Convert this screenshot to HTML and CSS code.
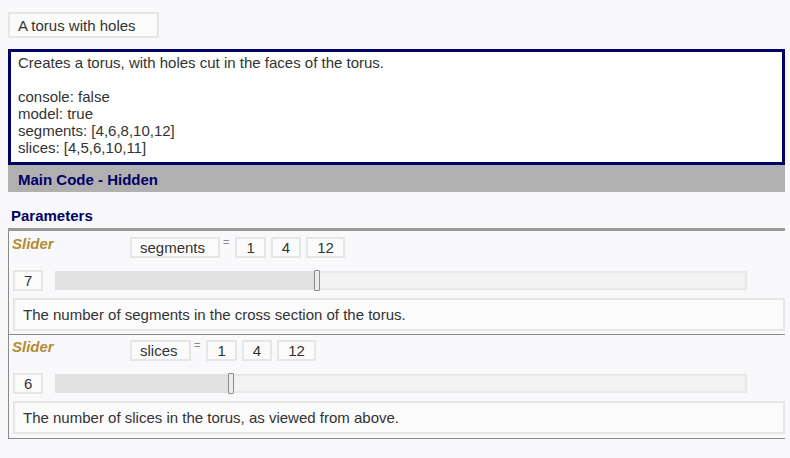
FILE: index.html
```html
<!DOCTYPE html>
<html>
<head>
<meta charset="utf-8">
<link rel="stylesheet" href="styles.css">
</head>
<body>
<div class="page">
  <div class="title">A torus with holes</div>
  <div class="desc">
    <div>Creates a torus, with holes cut in the faces of the torus.</div>
    <div class="blank">&nbsp;</div>
    <div>console: false</div>
    <div>model: true</div>
    <div>segments: [4,6,8,10,12]</div>
    <div>slices: [4,5,6,10,11]</div>
  </div>
  <div class="codebar">Main Code - Hidden</div>
  <div class="params-title">Parameters</div>
  <div class="params">
    <div class="slider">
      <div class="row head">
        <div class="kind">Slider</div>
        <div class="box name name-seg">segments</div>
        <div class="eq">=</div>
        <div class="nums">
          <div class="box num">1</div>
          <div class="box num">4</div>
          <div class="box num">12</div>
        </div>
      </div>
      <div class="row ctrl">
        <div class="box num val">7</div>
        <div class="track">
          <div class="fill" style="width: 37.5%"></div>
          <div class="thumb" style="left: 37.5%"></div>
        </div>
      </div>
      <div class="help">The number of segments in the cross section of the torus.</div>
    </div>
    <div class="slider">
      <div class="row head">
        <div class="kind">Slider</div>
        <div class="box name name-sli">slices</div>
        <div class="eq">=</div>
        <div class="nums">
          <div class="box num">1</div>
          <div class="box num">4</div>
          <div class="box num">12</div>
        </div>
      </div>
      <div class="row ctrl">
        <div class="box num val">6</div>
        <div class="track">
          <div class="fill" style="width: 25%"></div>
          <div class="thumb" style="left: 25%"></div>
        </div>
      </div>
      <div class="help">The number of slices in the torus, as viewed from above.</div>
    </div>
  </div>
</div>
</body>
</html>
```

FILE: styles.css
```css
html, body {
  margin: 0;
  padding: 0;
  background: #f9f9fb;
}
body {
  font-family: "Liberation Sans", Arial, sans-serif;
  font-size: 15px;
  line-height: 17px;
  color: #333333;
}
.page {
  width: 777px;
  padding: 12px 0 0 8px;
}
.title {
  display: inline-block;
  box-sizing: border-box;
  width: 151px;
  height: 26px;
  border: 2px solid #e6e6e6;
  background: #fbfbfc;
  padding: 3px 8px 2px 8px;
  vertical-align: top;
}
.desc {
  margin-top: 11px;
  border: 3px solid #000066;
  background: #ffffff;
  padding: 2px 7px 6px 7px;
}
.codebar {
  background: #b0b0b0;
  color: #000066;
  font-weight: bold;
  height: 27px;
  box-sizing: border-box;
  padding: 6px 0 0 10px;
}
.params-title {
  color: #000066;
  font-weight: bold;
  padding: 15px 0 0 3px;
  margin-bottom: 4px;
}
.params {
  border-top: 3px solid #999999;
}
.slider {
  border-left: 1px solid #8a8a8a;
  border-bottom: 1px solid #8a8a8a;
  padding: 6px 0 3px 4px;
}
.slider + .slider {
  padding-top: 5px;
  padding-bottom: 4px;
}
.row {
  display: flex;
}
.head {
  align-items: flex-start;
}
.kind {
  width: 118px;
  margin-left: -1px;
  margin-top: -2px;
  color: #b38c35;
  font-weight: bold;
  font-style: italic;
}
.box {
  box-sizing: border-box;
  height: 21px;
  border: 2px solid #e6e6e6;
  background: #fbfbfc;
  padding: 0 9px;
  line-height: 17px;
}
.name {
  padding-left: 8px;
}
.name-seg { width: 90px; }
.name-sli { width: 61px; }
.eq {
  font-size: 11px;
  line-height: 11px;
  color: #888888;
  padding: 0 6px 0 3px;
}
.nums {
  display: flex;
  gap: 5px;
}
.ctrl {
  margin-top: 12px;
  align-items: center;
}
.val {
  width: 30px;
}
.track {
  position: relative;
  box-sizing: border-box;
  margin-left: 12px;
  width: 692px;
  height: 19px;
  border: 2px solid #e8e8e8;
  background: #f3f3f3;
}
.fill {
  height: 100%;
  background: #e2e2e2;
  margin: -2px 0 0 -2px;
  padding: 2px 0 2px 2px;
}
.thumb {
  position: absolute;
  top: -3px;
  width: 4px;
  height: 19px;
  margin-left: -1px;
  border: 1px solid #8c8c8c;
  border-radius: 1px;
  background: #ececec;
}
.help {
  margin-top: 7px;
  box-sizing: border-box;
  height: 33px;
  border: 2px solid #e6e6e6;
  background: #fbfbfc;
  padding: 6px 8px;
}
```
